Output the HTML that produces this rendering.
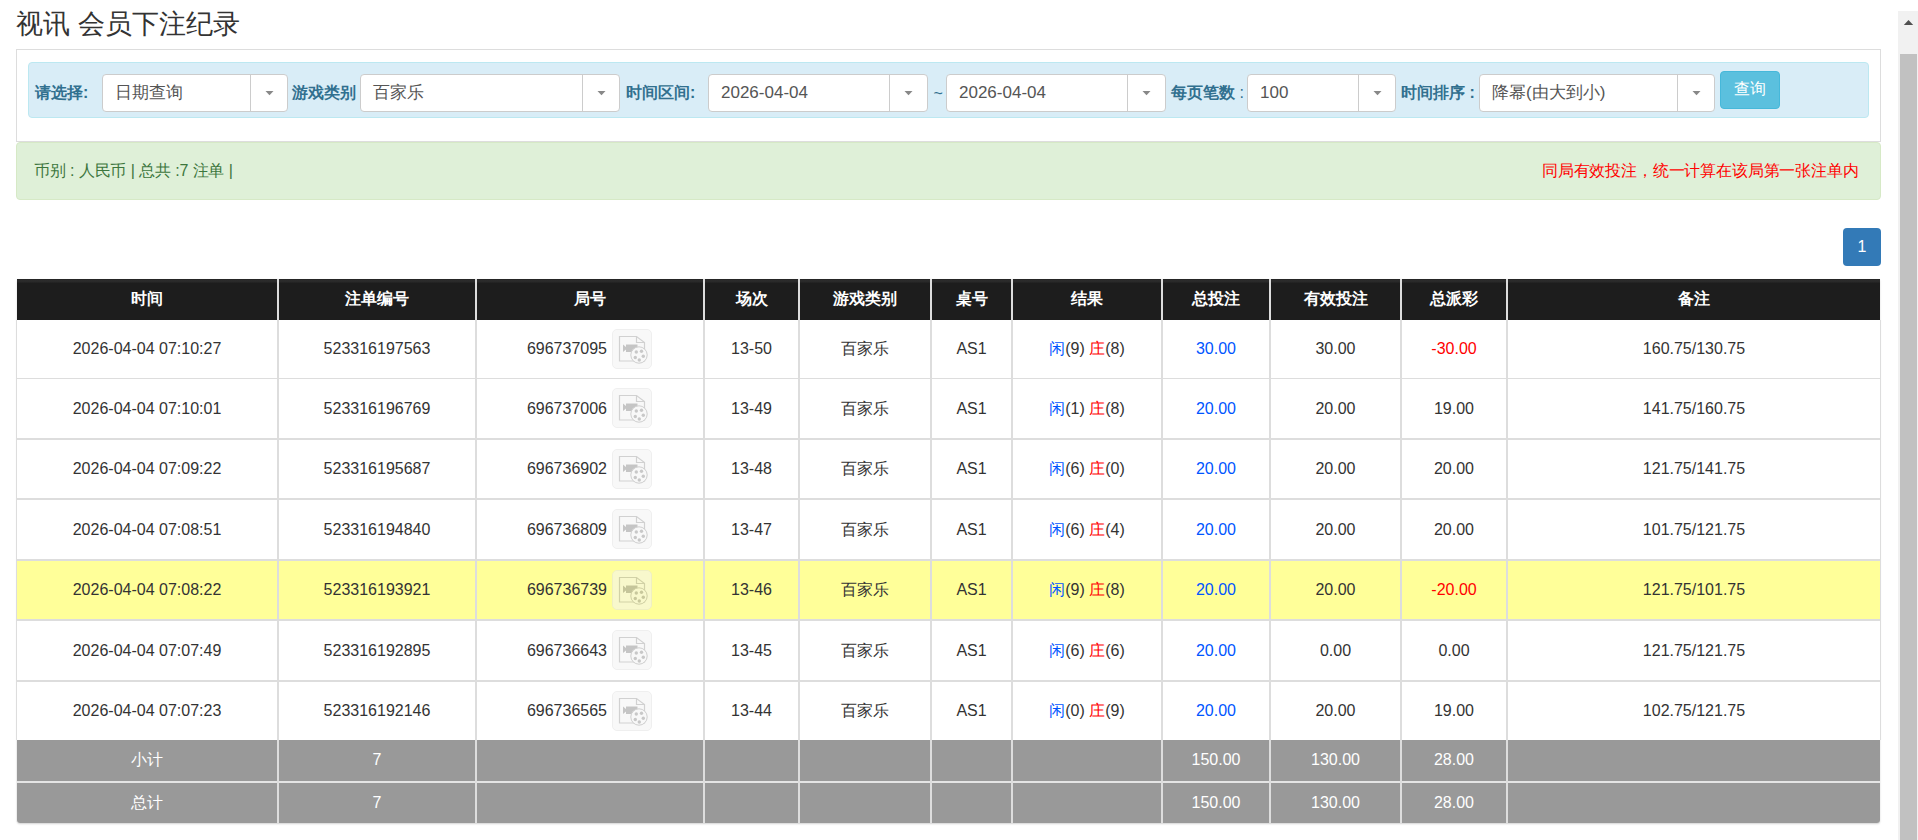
<!DOCTYPE html>
<html><head><meta charset="utf-8"><style>
html,body{margin:0;padding:0;background:#fff;width:1918px;height:840px;overflow:hidden;}
body{font-family:"Liberation Sans", sans-serif;color:#333;position:relative;}
.a{position:absolute;}
.sel{position:absolute;top:74px;height:36px;background:#fff;border:1px solid #ccc;border-radius:4px;box-sizing:content-box;}
.sel .t{position:absolute;left:12px;top:0;line-height:36px;font-size:17px;color:#555;white-space:nowrap;}
.sel .d{position:absolute;top:0;bottom:0;width:1px;background:#ccc;}
.sel .ar{position:absolute;top:16px;width:0;height:0;border-left:4px solid transparent;border-right:4px solid transparent;border-top:5px solid #888;}
.lbl{position:absolute;top:74px;line-height:38px;font-size:16px;font-weight:bold;color:#31708f;white-space:nowrap;}
.cell{position:absolute;text-align:center;font-size:16px;white-space:nowrap;}
.hd{color:#fff;font-weight:bold;}
.vl{position:absolute;width:2px;background:#ddd;}
.b{color:#0055ff}.r{color:#ff0000}
.ic{position:absolute;width:38px;height:38px;border:1px solid #e4e4e4;border-radius:5px;background:#f4f4f4;opacity:0.57;}
.ic svg{position:absolute;left:-1px;top:-1px;}
</style></head><body>

<div class="a" style="left:16px;top:7px;font-size:27px;line-height:34px;color:#333;white-space:nowrap">视讯 会员下注纪录</div>
<div class="a" style="left:16px;top:49px;width:1863px;height:91px;border:1px solid #ddd;background:#fff"></div>
<div class="a" style="left:28px;top:62px;width:1839px;height:54px;border:1px solid #bce8f1;background:#d9edf7;border-radius:4px"></div>
<div class="lbl" style="left:35px">请选择:</div>
<div class="lbl" style="left:292px">游戏类别</div>
<div class="lbl" style="left:626px">时间区间:</div>
<div class="lbl" style="left:933.5px;top:75px;font-weight:normal">~</div>
<div class="lbl" style="left:1171px">每页笔数 <span style="font-weight:normal">:</span></div>
<div class="lbl" style="left:1401px">时间排序 :</div>
<div class="sel" style="left:102px;width:184px"><div class="t">日期查询</div><div class="d" style="left:147px"></div><svg class="ar2" width="10" height="6" style="position:absolute;top:16px;left:162px"><polygon points="0.5,0 8.5,0 4.5,4.2" fill="#888"/></svg></div>
<div class="sel" style="left:360px;width:258px"><div class="t">百家乐</div><div class="d" style="left:221px"></div><svg class="ar2" width="10" height="6" style="position:absolute;top:16px;left:236px"><polygon points="0.5,0 8.5,0 4.5,4.2" fill="#888"/></svg></div>
<div class="sel" style="left:708px;width:218px"><div class="t">2026-04-04</div><div class="d" style="left:180px"></div><svg class="ar2" width="10" height="6" style="position:absolute;top:16px;left:195px"><polygon points="0.5,0 8.5,0 4.5,4.2" fill="#888"/></svg></div>
<div class="sel" style="left:946px;width:218px"><div class="t">2026-04-04</div><div class="d" style="left:180px"></div><svg class="ar2" width="10" height="6" style="position:absolute;top:16px;left:195px"><polygon points="0.5,0 8.5,0 4.5,4.2" fill="#888"/></svg></div>
<div class="sel" style="left:1247px;width:147px"><div class="t">100</div><div class="d" style="left:110px"></div><svg class="ar2" width="10" height="6" style="position:absolute;top:16px;left:125px"><polygon points="0.5,0 8.5,0 4.5,4.2" fill="#888"/></svg></div>
<div class="sel" style="left:1479px;width:234px"><div class="t">降幂(由大到小)</div><div class="d" style="left:197px"></div><svg class="ar2" width="10" height="6" style="position:absolute;top:16px;left:212px"><polygon points="0.5,0 8.5,0 4.5,4.2" fill="#888"/></svg></div>
<div class="a" style="left:1720px;top:71px;width:58px;height:36px;border:1px solid #46b8da;background:#5bc0de;border-radius:4px;color:#fff;font-size:16px;line-height:34px;text-align:center">查询</div>
<div class="a" style="left:16px;top:142px;width:1863px;height:56px;border:1px solid #d6e9c6;background:#dff0d8;border-radius:4px"></div>
<div class="a" style="left:34px;top:141.5px;line-height:58px;font-size:16px;color:#3c763d;white-space:nowrap;letter-spacing:-0.12px">币别 : 人民币 | 总共 :7 注单 |</div>
<div class="a" style="left:1542px;top:141.5px;line-height:58px;font-size:16px;color:#ff0000;white-space:nowrap;letter-spacing:-0.17px">同局有效投注，统一计算在该局第一张注单内</div>
<div class="a" style="left:1843px;top:228px;width:38px;height:38px;background:#337ab7;border-radius:4px;color:#fff;font-size:16px;line-height:38px;text-align:center">1</div>
<div class="a" style="left:17px;top:279px;width:1863px;height:544px;box-shadow:0 1px 2px rgba(0,0,0,0.18);border-radius:0 0 3px 3px"></div>
<div class="a" style="left:17px;top:279px;width:1863px;height:41px;background:linear-gradient(to bottom,#1f1f1f 0px,#2c2c2c 1px,#2a2a2a 2.5px,#1d1d1d 4.5px)"></div>
<div class="a" style="left:16px;top:320px;width:1865px;height:420px;background:#fff"></div>
<div class="a" style="left:17px;top:561px;width:1863px;height:58px;background:#ffff99"></div>
<div class="a" style="left:17px;top:740px;width:1863px;height:83px;background:#999;border-radius:0 0 3px 3px"></div>
<div class="a" style="left:16px;top:320px;width:1px;height:420px;background:#ddd"></div>
<div class="a" style="left:1880px;top:320px;width:1px;height:420px;background:#ddd"></div>
<div class="a" style="left:16px;top:740px;width:1px;height:82px;background:#eee"></div>
<div class="a" style="left:16px;top:378px;width:1865px;height:1px;background:#ddd"></div>
<div class="a" style="left:16px;top:438px;width:1865px;height:2px;background:#ddd"></div>
<div class="a" style="left:16px;top:498px;width:1865px;height:2px;background:#ddd"></div>
<div class="a" style="left:16px;top:559px;width:1865px;height:2px;background:#ddd"></div>
<div class="a" style="left:16px;top:619px;width:1865px;height:2px;background:#ddd"></div>
<div class="a" style="left:16px;top:680px;width:1865px;height:2px;background:#ddd"></div>
<div class="a" style="left:17px;top:781px;width:1863px;height:2px;background:#e4e4e4"></div>
<div class="vl" style="left:277px;top:279px;height:544px"></div>
<div class="vl" style="left:475px;top:279px;height:544px"></div>
<div class="vl" style="left:703px;top:279px;height:544px"></div>
<div class="vl" style="left:798px;top:279px;height:544px"></div>
<div class="vl" style="left:930px;top:279px;height:544px"></div>
<div class="vl" style="left:1011px;top:279px;height:544px"></div>
<div class="vl" style="left:1161px;top:279px;height:544px"></div>
<div class="vl" style="left:1269px;top:279px;height:544px"></div>
<div class="vl" style="left:1400px;top:279px;height:544px"></div>
<div class="vl" style="left:1506px;top:279px;height:544px"></div>
<div class="cell hd" style="left:17px;width:260px;top:277.5px;line-height:41px">时间</div>
<div class="cell hd" style="left:279px;width:196px;top:277.5px;line-height:41px">注单编号</div>
<div class="cell hd" style="left:477px;width:226px;top:277.5px;line-height:41px">局号</div>
<div class="cell hd" style="left:705px;width:93px;top:277.5px;line-height:41px">场次</div>
<div class="cell hd" style="left:800px;width:130px;top:277.5px;line-height:41px">游戏类别</div>
<div class="cell hd" style="left:932px;width:79px;top:277.5px;line-height:41px">桌号</div>
<div class="cell hd" style="left:1013px;width:148px;top:277.5px;line-height:41px">结果</div>
<div class="cell hd" style="left:1163px;width:106px;top:277.5px;line-height:41px">总投注</div>
<div class="cell hd" style="left:1271px;width:129px;top:277.5px;line-height:41px">有效投注</div>
<div class="cell hd" style="left:1402px;width:104px;top:277.5px;line-height:41px">总派彩</div>
<div class="cell hd" style="left:1508px;width:372px;top:277.5px;line-height:41px">备注</div>
<div class="cell" style="left:17px;width:260px;top:320px;line-height:58px">2026-04-04 07:10:27</div>
<div class="cell" style="left:279px;width:196px;top:320px;line-height:58px">523316197563</div>
<div class="cell" style="left:477px;width:130px;top:320px;line-height:58px;text-align:right">696737095</div>
<div class="ic" style="left:612px;top:329px"><svg width="40" height="40" viewBox="0 0 40 40"><path d="M7.5 7.5h17l8 6v18.5h-25z" fill="none" stroke="#b0b0b0" stroke-width="1.2"/><path d="M24.5 7.5v6h8" fill="none" stroke="#b0b0b0" stroke-width="1.2"/><path d="M11 15.5l3 2.5v-2.5h11.5v7.5h-11.5v-2.5l-3 2.5z" fill="#9b9b9b"/><circle cx="27" cy="26" r="8.2" fill="#f4f4f4" stroke="#ababab" stroke-width="1"/><circle cx="24.3" cy="23" r="1.7" fill="#a0a0a0"/><circle cx="29.5" cy="22.3" r="1.7" fill="#a0a0a0"/><circle cx="31.3" cy="27.3" r="1.7" fill="#a0a0a0"/><circle cx="27.3" cy="31" r="1.7" fill="#a0a0a0"/><circle cx="23.3" cy="28.5" r="1.7" fill="#a0a0a0"/></svg></div>
<div class="cell" style="left:705px;width:93px;top:320px;line-height:58px">13-50</div>
<div class="cell" style="left:800px;width:130px;top:320px;line-height:58px">百家乐</div>
<div class="cell" style="left:932px;width:79px;top:320px;line-height:58px">AS1</div>
<div class="cell" style="left:1013px;width:148px;top:320px;line-height:58px"><span class="b">闲</span>(9) <span class="r">庄</span>(8)</div>
<div class="cell" style="left:1163px;width:106px;top:320px;line-height:58px"><span class="b">30.00</span></div>
<div class="cell" style="left:1271px;width:129px;top:320px;line-height:58px">30.00</div>
<div class="cell" style="left:1402px;width:104px;top:320px;line-height:58px"><span class="r">-30.00</span></div>
<div class="cell" style="left:1508px;width:372px;top:320px;line-height:58px">160.75/130.75</div>
<div class="cell" style="left:17px;width:260px;top:379px;line-height:59px">2026-04-04 07:10:01</div>
<div class="cell" style="left:279px;width:196px;top:379px;line-height:59px">523316196769</div>
<div class="cell" style="left:477px;width:130px;top:379px;line-height:59px;text-align:right">696737006</div>
<div class="ic" style="left:612px;top:388px"><svg width="40" height="40" viewBox="0 0 40 40"><path d="M7.5 7.5h17l8 6v18.5h-25z" fill="none" stroke="#b0b0b0" stroke-width="1.2"/><path d="M24.5 7.5v6h8" fill="none" stroke="#b0b0b0" stroke-width="1.2"/><path d="M11 15.5l3 2.5v-2.5h11.5v7.5h-11.5v-2.5l-3 2.5z" fill="#9b9b9b"/><circle cx="27" cy="26" r="8.2" fill="#f4f4f4" stroke="#ababab" stroke-width="1"/><circle cx="24.3" cy="23" r="1.7" fill="#a0a0a0"/><circle cx="29.5" cy="22.3" r="1.7" fill="#a0a0a0"/><circle cx="31.3" cy="27.3" r="1.7" fill="#a0a0a0"/><circle cx="27.3" cy="31" r="1.7" fill="#a0a0a0"/><circle cx="23.3" cy="28.5" r="1.7" fill="#a0a0a0"/></svg></div>
<div class="cell" style="left:705px;width:93px;top:379px;line-height:59px">13-49</div>
<div class="cell" style="left:800px;width:130px;top:379px;line-height:59px">百家乐</div>
<div class="cell" style="left:932px;width:79px;top:379px;line-height:59px">AS1</div>
<div class="cell" style="left:1013px;width:148px;top:379px;line-height:59px"><span class="b">闲</span>(1) <span class="r">庄</span>(8)</div>
<div class="cell" style="left:1163px;width:106px;top:379px;line-height:59px"><span class="b">20.00</span></div>
<div class="cell" style="left:1271px;width:129px;top:379px;line-height:59px">20.00</div>
<div class="cell" style="left:1402px;width:104px;top:379px;line-height:59px">19.00</div>
<div class="cell" style="left:1508px;width:372px;top:379px;line-height:59px">141.75/160.75</div>
<div class="cell" style="left:17px;width:260px;top:440px;line-height:58px">2026-04-04 07:09:22</div>
<div class="cell" style="left:279px;width:196px;top:440px;line-height:58px">523316195687</div>
<div class="cell" style="left:477px;width:130px;top:440px;line-height:58px;text-align:right">696736902</div>
<div class="ic" style="left:612px;top:449px"><svg width="40" height="40" viewBox="0 0 40 40"><path d="M7.5 7.5h17l8 6v18.5h-25z" fill="none" stroke="#b0b0b0" stroke-width="1.2"/><path d="M24.5 7.5v6h8" fill="none" stroke="#b0b0b0" stroke-width="1.2"/><path d="M11 15.5l3 2.5v-2.5h11.5v7.5h-11.5v-2.5l-3 2.5z" fill="#9b9b9b"/><circle cx="27" cy="26" r="8.2" fill="#f4f4f4" stroke="#ababab" stroke-width="1"/><circle cx="24.3" cy="23" r="1.7" fill="#a0a0a0"/><circle cx="29.5" cy="22.3" r="1.7" fill="#a0a0a0"/><circle cx="31.3" cy="27.3" r="1.7" fill="#a0a0a0"/><circle cx="27.3" cy="31" r="1.7" fill="#a0a0a0"/><circle cx="23.3" cy="28.5" r="1.7" fill="#a0a0a0"/></svg></div>
<div class="cell" style="left:705px;width:93px;top:440px;line-height:58px">13-48</div>
<div class="cell" style="left:800px;width:130px;top:440px;line-height:58px">百家乐</div>
<div class="cell" style="left:932px;width:79px;top:440px;line-height:58px">AS1</div>
<div class="cell" style="left:1013px;width:148px;top:440px;line-height:58px"><span class="b">闲</span>(6) <span class="r">庄</span>(0)</div>
<div class="cell" style="left:1163px;width:106px;top:440px;line-height:58px"><span class="b">20.00</span></div>
<div class="cell" style="left:1271px;width:129px;top:440px;line-height:58px">20.00</div>
<div class="cell" style="left:1402px;width:104px;top:440px;line-height:58px">20.00</div>
<div class="cell" style="left:1508px;width:372px;top:440px;line-height:58px">121.75/141.75</div>
<div class="cell" style="left:17px;width:260px;top:500px;line-height:59px">2026-04-04 07:08:51</div>
<div class="cell" style="left:279px;width:196px;top:500px;line-height:59px">523316194840</div>
<div class="cell" style="left:477px;width:130px;top:500px;line-height:59px;text-align:right">696736809</div>
<div class="ic" style="left:612px;top:509px"><svg width="40" height="40" viewBox="0 0 40 40"><path d="M7.5 7.5h17l8 6v18.5h-25z" fill="none" stroke="#b0b0b0" stroke-width="1.2"/><path d="M24.5 7.5v6h8" fill="none" stroke="#b0b0b0" stroke-width="1.2"/><path d="M11 15.5l3 2.5v-2.5h11.5v7.5h-11.5v-2.5l-3 2.5z" fill="#9b9b9b"/><circle cx="27" cy="26" r="8.2" fill="#f4f4f4" stroke="#ababab" stroke-width="1"/><circle cx="24.3" cy="23" r="1.7" fill="#a0a0a0"/><circle cx="29.5" cy="22.3" r="1.7" fill="#a0a0a0"/><circle cx="31.3" cy="27.3" r="1.7" fill="#a0a0a0"/><circle cx="27.3" cy="31" r="1.7" fill="#a0a0a0"/><circle cx="23.3" cy="28.5" r="1.7" fill="#a0a0a0"/></svg></div>
<div class="cell" style="left:705px;width:93px;top:500px;line-height:59px">13-47</div>
<div class="cell" style="left:800px;width:130px;top:500px;line-height:59px">百家乐</div>
<div class="cell" style="left:932px;width:79px;top:500px;line-height:59px">AS1</div>
<div class="cell" style="left:1013px;width:148px;top:500px;line-height:59px"><span class="b">闲</span>(6) <span class="r">庄</span>(4)</div>
<div class="cell" style="left:1163px;width:106px;top:500px;line-height:59px"><span class="b">20.00</span></div>
<div class="cell" style="left:1271px;width:129px;top:500px;line-height:59px">20.00</div>
<div class="cell" style="left:1402px;width:104px;top:500px;line-height:59px">20.00</div>
<div class="cell" style="left:1508px;width:372px;top:500px;line-height:59px">101.75/121.75</div>
<div class="cell" style="left:17px;width:260px;top:561px;line-height:58px">2026-04-04 07:08:22</div>
<div class="cell" style="left:279px;width:196px;top:561px;line-height:58px">523316193921</div>
<div class="cell" style="left:477px;width:130px;top:561px;line-height:58px;text-align:right">696736739</div>
<div class="ic" style="left:612px;top:570px"><svg width="40" height="40" viewBox="0 0 40 40"><path d="M7.5 7.5h17l8 6v18.5h-25z" fill="none" stroke="#b0b0b0" stroke-width="1.2"/><path d="M24.5 7.5v6h8" fill="none" stroke="#b0b0b0" stroke-width="1.2"/><path d="M11 15.5l3 2.5v-2.5h11.5v7.5h-11.5v-2.5l-3 2.5z" fill="#9b9b9b"/><circle cx="27" cy="26" r="8.2" fill="#f4f4f4" stroke="#ababab" stroke-width="1"/><circle cx="24.3" cy="23" r="1.7" fill="#a0a0a0"/><circle cx="29.5" cy="22.3" r="1.7" fill="#a0a0a0"/><circle cx="31.3" cy="27.3" r="1.7" fill="#a0a0a0"/><circle cx="27.3" cy="31" r="1.7" fill="#a0a0a0"/><circle cx="23.3" cy="28.5" r="1.7" fill="#a0a0a0"/></svg></div>
<div class="cell" style="left:705px;width:93px;top:561px;line-height:58px">13-46</div>
<div class="cell" style="left:800px;width:130px;top:561px;line-height:58px">百家乐</div>
<div class="cell" style="left:932px;width:79px;top:561px;line-height:58px">AS1</div>
<div class="cell" style="left:1013px;width:148px;top:561px;line-height:58px"><span class="b">闲</span>(9) <span class="r">庄</span>(8)</div>
<div class="cell" style="left:1163px;width:106px;top:561px;line-height:58px"><span class="b">20.00</span></div>
<div class="cell" style="left:1271px;width:129px;top:561px;line-height:58px">20.00</div>
<div class="cell" style="left:1402px;width:104px;top:561px;line-height:58px"><span class="r">-20.00</span></div>
<div class="cell" style="left:1508px;width:372px;top:561px;line-height:58px">121.75/101.75</div>
<div class="cell" style="left:17px;width:260px;top:621px;line-height:59px">2026-04-04 07:07:49</div>
<div class="cell" style="left:279px;width:196px;top:621px;line-height:59px">523316192895</div>
<div class="cell" style="left:477px;width:130px;top:621px;line-height:59px;text-align:right">696736643</div>
<div class="ic" style="left:612px;top:630px"><svg width="40" height="40" viewBox="0 0 40 40"><path d="M7.5 7.5h17l8 6v18.5h-25z" fill="none" stroke="#b0b0b0" stroke-width="1.2"/><path d="M24.5 7.5v6h8" fill="none" stroke="#b0b0b0" stroke-width="1.2"/><path d="M11 15.5l3 2.5v-2.5h11.5v7.5h-11.5v-2.5l-3 2.5z" fill="#9b9b9b"/><circle cx="27" cy="26" r="8.2" fill="#f4f4f4" stroke="#ababab" stroke-width="1"/><circle cx="24.3" cy="23" r="1.7" fill="#a0a0a0"/><circle cx="29.5" cy="22.3" r="1.7" fill="#a0a0a0"/><circle cx="31.3" cy="27.3" r="1.7" fill="#a0a0a0"/><circle cx="27.3" cy="31" r="1.7" fill="#a0a0a0"/><circle cx="23.3" cy="28.5" r="1.7" fill="#a0a0a0"/></svg></div>
<div class="cell" style="left:705px;width:93px;top:621px;line-height:59px">13-45</div>
<div class="cell" style="left:800px;width:130px;top:621px;line-height:59px">百家乐</div>
<div class="cell" style="left:932px;width:79px;top:621px;line-height:59px">AS1</div>
<div class="cell" style="left:1013px;width:148px;top:621px;line-height:59px"><span class="b">闲</span>(6) <span class="r">庄</span>(6)</div>
<div class="cell" style="left:1163px;width:106px;top:621px;line-height:59px"><span class="b">20.00</span></div>
<div class="cell" style="left:1271px;width:129px;top:621px;line-height:59px">0.00</div>
<div class="cell" style="left:1402px;width:104px;top:621px;line-height:59px">0.00</div>
<div class="cell" style="left:1508px;width:372px;top:621px;line-height:59px">121.75/121.75</div>
<div class="cell" style="left:17px;width:260px;top:682px;line-height:58px">2026-04-04 07:07:23</div>
<div class="cell" style="left:279px;width:196px;top:682px;line-height:58px">523316192146</div>
<div class="cell" style="left:477px;width:130px;top:682px;line-height:58px;text-align:right">696736565</div>
<div class="ic" style="left:612px;top:691px"><svg width="40" height="40" viewBox="0 0 40 40"><path d="M7.5 7.5h17l8 6v18.5h-25z" fill="none" stroke="#b0b0b0" stroke-width="1.2"/><path d="M24.5 7.5v6h8" fill="none" stroke="#b0b0b0" stroke-width="1.2"/><path d="M11 15.5l3 2.5v-2.5h11.5v7.5h-11.5v-2.5l-3 2.5z" fill="#9b9b9b"/><circle cx="27" cy="26" r="8.2" fill="#f4f4f4" stroke="#ababab" stroke-width="1"/><circle cx="24.3" cy="23" r="1.7" fill="#a0a0a0"/><circle cx="29.5" cy="22.3" r="1.7" fill="#a0a0a0"/><circle cx="31.3" cy="27.3" r="1.7" fill="#a0a0a0"/><circle cx="27.3" cy="31" r="1.7" fill="#a0a0a0"/><circle cx="23.3" cy="28.5" r="1.7" fill="#a0a0a0"/></svg></div>
<div class="cell" style="left:705px;width:93px;top:682px;line-height:58px">13-44</div>
<div class="cell" style="left:800px;width:130px;top:682px;line-height:58px">百家乐</div>
<div class="cell" style="left:932px;width:79px;top:682px;line-height:58px">AS1</div>
<div class="cell" style="left:1013px;width:148px;top:682px;line-height:58px"><span class="b">闲</span>(0) <span class="r">庄</span>(9)</div>
<div class="cell" style="left:1163px;width:106px;top:682px;line-height:58px"><span class="b">20.00</span></div>
<div class="cell" style="left:1271px;width:129px;top:682px;line-height:58px">20.00</div>
<div class="cell" style="left:1402px;width:104px;top:682px;line-height:58px">19.00</div>
<div class="cell" style="left:1508px;width:372px;top:682px;line-height:58px">102.75/121.75</div>
<div class="cell" style="left:17px;width:260px;top:739px;line-height:41px;color:#fff">小计</div>
<div class="cell" style="left:279px;width:196px;top:739px;line-height:41px;color:#fff">7</div>
<div class="cell" style="left:1163px;width:106px;top:739px;line-height:41px;color:#fff">150.00</div>
<div class="cell" style="left:1271px;width:129px;top:739px;line-height:41px;color:#fff">130.00</div>
<div class="cell" style="left:1402px;width:104px;top:739px;line-height:41px;color:#fff">28.00</div>
<div class="cell" style="left:17px;width:260px;top:783px;line-height:40px;color:#fff">总计</div>
<div class="cell" style="left:279px;width:196px;top:783px;line-height:40px;color:#fff">7</div>
<div class="cell" style="left:1163px;width:106px;top:783px;line-height:40px;color:#fff">150.00</div>
<div class="cell" style="left:1271px;width:129px;top:783px;line-height:40px;color:#fff">130.00</div>
<div class="cell" style="left:1402px;width:104px;top:783px;line-height:40px;color:#fff">28.00</div>
<div class="a" style="left:1898px;top:11px;width:20px;height:829px;background:#f1f1f1"></div>
<svg class="a" style="left:1898px;top:11px" width="20" height="20"><polygon points="5.8,14 15.2,14 10.5,9" fill="#505050"/></svg>
<div class="a" style="left:1900px;top:54px;width:17px;height:786px;background:#c1c1c1"></div>
</body></html>
